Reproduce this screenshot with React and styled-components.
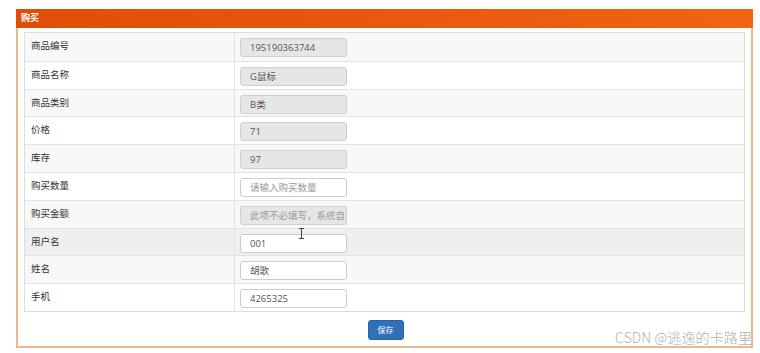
import React from "react";
import styled, { createGlobalStyle } from "styled-components";

const GlobalStyle = createGlobalStyle`
  body {
    margin: 0;
    background: #ffffff;
    font-family: "Noto Sans CJK SC", "Open Sans", sans-serif;
  }
`;

const Page = styled.div`
  position: relative;
  width: 760px;
  height: 353px;
  padding: 9px 7px 0 16px;
  box-sizing: border-box;
  overflow: hidden;
`;

const Panel = styled.div`
  width: 737px;
  height: 339px;
  box-sizing: border-box;
  border: 2px solid #ecb690;
  border-top: none;
  display: flex;
  flex-direction: column;
`;

const Heading = styled.div`
  height: 19px;
  margin: 0 -2px;
  background: linear-gradient(90deg, #e04d06, #f26312);
  color: #fff;
  font-size: 9px;
  font-weight: 700;
  line-height: 18px;
  padding-left: 5px;
`;

const Body = styled.div`
  padding: 4px 6px 0 6px;
  display: flex;
  flex-direction: column;
`;

const Table = styled.div`
  border: 1px solid #dddddd;
  display: flex;
  flex-direction: column;
`;

const Row = styled.div`
  display: grid;
  grid-template-columns: 210px 1fr;
  height: 27.8px;
  box-sizing: border-box;
  border-top: ${({ $first }) => ($first ? "none" : "1px solid #e3e3e3")};
  background: ${({ $bg }) => $bg};
`;

const Label = styled.div`
  border-right: 1px solid #e3e3e3;
  font-size: 9.5px;
  color: #333;
  padding: 5px 0 0 6px;
`;

const Cell = styled.div`
  padding: 5px 0 0 5px;
`;

const Field = styled.div`
  width: 107px;
  height: 19px;
  box-sizing: border-box;
  border: 1px solid ${({ $readonly }) => ($readonly ? "#cfcfcf" : "#cccccc")};
  border-radius: 3px;
  background: ${({ $readonly }) => ($readonly ? "#e6e6e6" : "#ffffff")};
  color: ${({ $placeholder }) => ($placeholder ? "#999" : "#555")};
  font-size: 9.5px;
  line-height: 17px;
  padding-left: 9px;
  white-space: nowrap;
  overflow: hidden;
  font-family: "Open Sans", "Noto Sans CJK SC", sans-serif;
`;

const Footer = styled.div`
  display: flex;
  justify-content: center;
  padding-top: 8px;
  padding-left: 2px;
`;

const SaveButton = styled.button`
  width: 36px;
  height: 20px;
  border: 1px solid #2a64a6;
  border-radius: 3px;
  background: #2f70b8;
  color: #fff;
  font-size: 8px;
  font-family: "Noto Sans CJK SC", sans-serif;
  padding: 0;
`;

const Watermark = styled.div`
  position: absolute;
  right: 8px;
  bottom: 6px;
  color: #b0b0b0;
  font-size: 14px;
  font-weight: 300;
  font-family: "Noto Sans CJK SC", sans-serif;
  letter-spacing: 0.1px;
`;

const Cursor = styled.svg`
  position: absolute;
  left: 298px;
  top: 228px;
`;

const rows = [
  { label: "商品编号", value: "195190363744", readonly: true },
  { label: "商品名称", value: "G鼠标", readonly: true },
  { label: "商品类别", value: "B类", readonly: true },
  { label: "价格", value: "71", readonly: true },
  { label: "库存", value: "97", readonly: true },
  { label: "购买数量", value: "请输入购买数量", placeholder: true },
  { label: "购买金额", value: "此项不必填写，系统自动计算", readonly: true, placeholder: true },
  { label: "用户名", value: "001", hover: true },
  { label: "姓名", value: "胡歌" },
  { label: "手机", value: "4265325" },
];

const App = () => {
  return (
    <Page>
      <GlobalStyle />
      <Panel>
        <Heading>购买</Heading>
        <Body>
          <Table>
            {rows.map((r, i) => (
              <Row
                key={r.label}
                $first={i === 0}
                $bg={r.hover ? "#efefef" : i % 2 === 0 ? "#f8f8f8" : "#ffffff"}
              >
                <Label>{r.label}</Label>
                <Cell>
                  <Field $readonly={r.readonly} $placeholder={r.placeholder}>
                    {r.value}
                  </Field>
                </Cell>
              </Row>
            ))}
          </Table>
          <Footer>
            <SaveButton>保存</SaveButton>
          </Footer>
        </Body>
      </Panel>
      <Cursor width="7" height="11" viewBox="0 0 7 11">
        <path d="M1 0.5h5M3.5 0.5v10M1 10.5h5" stroke="#444" strokeWidth="1" fill="none" />
      </Cursor>
      <Watermark>CSDN @逃逸的卡路里</Watermark>
    </Page>
  );
};

export default App;
